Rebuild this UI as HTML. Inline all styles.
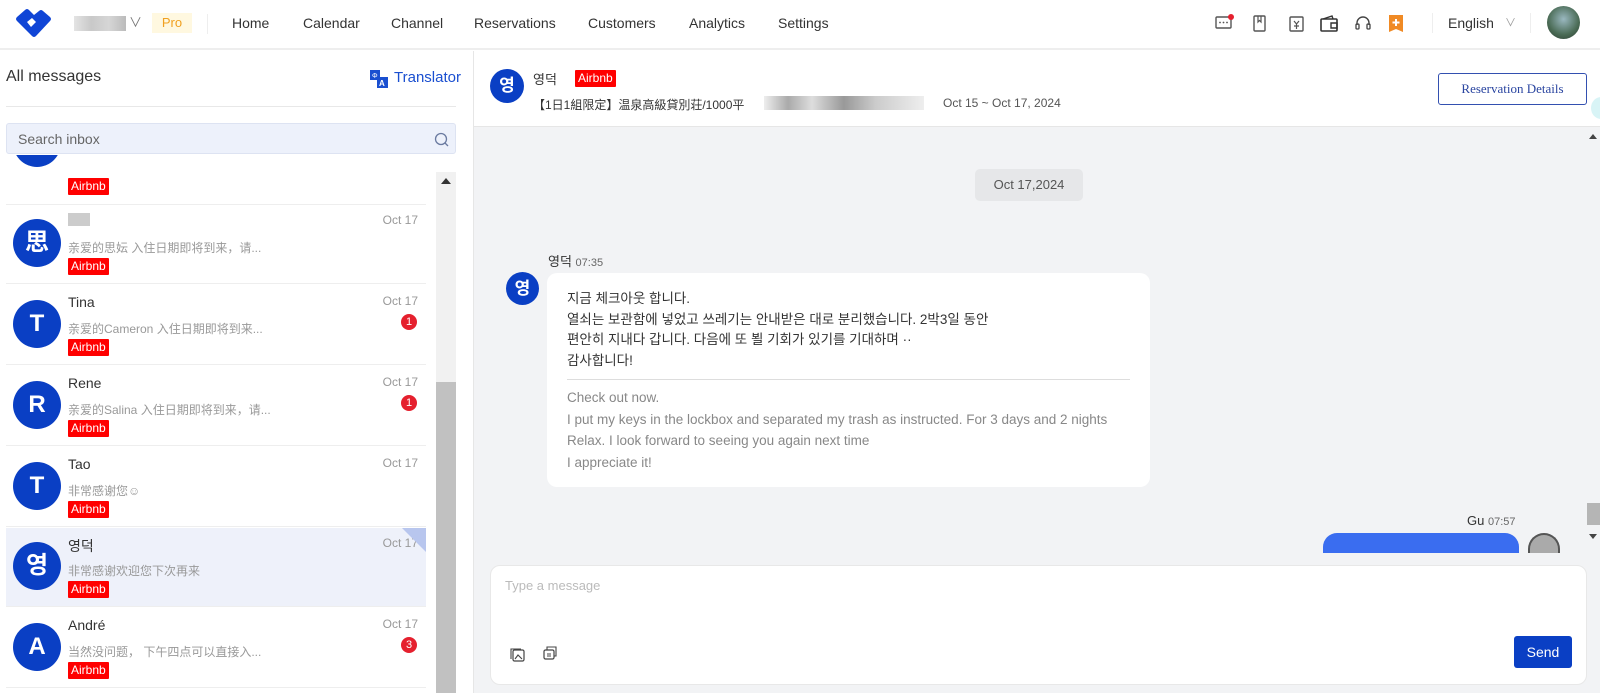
<!DOCTYPE html>
<html><head><meta charset="utf-8"><style>
*{box-sizing:border-box;margin:0;padding:0}
body{width:1600px;height:693px;overflow:hidden;background:#fff;font-family:"Liberation Sans","Noto Sans CJK SC",sans-serif;color:#333;position:relative}
.abs{position:absolute}
.nav{top:0;left:0;width:1600px;height:50px;border-bottom:2px solid #eee;background:#fff}
.nav .m{position:absolute;top:15px;font-size:14px;color:#333}
.tag{display:inline-block;background:#f00;color:#fff;font-size:12px;padding:1px 3px;line-height:15px;border-radius:1px}
.row{position:absolute;left:6px;width:420px;height:79px;border-bottom:1px solid #eee}
.av{position:absolute;left:7px;top:14px;width:48px;height:48px;border-radius:50%;background:#0a3fc4;color:#fff;font-size:24px;font-weight:bold;text-align:center;line-height:48px}
.nm{position:absolute;left:62px;top:8px;font-size:14px;color:#333}
.pv{position:absolute;left:62px;top:34px;font-size:12px;color:#999}
.rt{position:absolute;left:62px;top:52px}
.dt{position:absolute;right:8px;top:8px;font-size:12px;color:#999}
.bd{position:absolute;right:9px;top:28px;width:16px;height:16px;border-radius:50%;background:#e5202e;color:#fff;font-size:11px;text-align:center;line-height:16px}
.ic{position:absolute;top:14px}
</style></head><body>
<div class="abs nav">
<svg class="abs" style="left:14px;top:8px" width="40" height="32" viewBox="0 0 40 32"><path d="M3 13 Q1 11 3 9 L11 2 Q13 0 15 2 L20 7 L25 3 Q27 1 29 3 L36 9 Q38 11 36 13 L22 28 Q20 30 18 28 Z" fill="#1045d6"/><path d="M13 14 L18 10 L22 14 L17 19 Z" fill="#fff"/></svg>
<div class="abs" style="left:74px;top:16px;width:52px;height:15px;background:linear-gradient(90deg,#ddd,#bbb,#ccc,#aaa);opacity:.8"></div>
<div class="abs" style="left:129px;top:12px;font-size:13px;color:#777">∨</div>
<div class="abs" style="left:152px;top:13px;width:40px;height:20px;background:#fff8e0;color:#f0a020;font-size:13px;text-align:center;line-height:20px">Pro</div>
<div class="abs" style="left:207px;top:14px;width:1px;height:20px;background:#eee"></div>
<span class="m" style="left:232px">Home</span><span class="m" style="left:303px">Calendar</span><span class="m" style="left:391px">Channel</span><span class="m" style="left:474px">Reservations</span><span class="m" style="left:588px">Customers</span><span class="m" style="left:689px">Analytics</span><span class="m" style="left:778px">Settings</span>
<svg class="ic" style="left:1215px" width="20" height="18" viewBox="0 0 20 18"><rect x="1" y="3" width="15" height="11" rx="1" fill="none" stroke="#555" stroke-width="1.4"/><circle cx="5" cy="8.5" r=".9" fill="#555"/><circle cx="8.5" cy="8.5" r=".9" fill="#555"/><circle cx="12" cy="8.5" r=".9" fill="#555"/><circle cx="16" cy="3" r="3" fill="#e5202e"/></svg>
<svg class="ic" style="left:1252px" width="16" height="20" viewBox="0 0 16 20"><rect x="2" y="2" width="11" height="15" rx="1" fill="none" stroke="#555" stroke-width="1.4"/><path d="M6 2v6l1.5-1.5L9 8V2" fill="none" stroke="#555" stroke-width="1.2"/></svg>
<svg class="ic" style="left:1288px" width="18" height="20" viewBox="0 0 18 20"><rect x="2" y="3" width="13" height="14" rx="1" fill="none" stroke="#555" stroke-width="1.4"/><path d="M6 7l2.5 3 2.5-3M8.5 10v5M6 12h5" fill="none" stroke="#555" stroke-width="1.2"/></svg>
<svg class="ic" style="left:1319px" width="20" height="20" viewBox="0 0 20 20"><rect x="2" y="5" width="16" height="12" rx="1" fill="none" stroke="#333" stroke-width="1.6"/><path d="M4 5l9-3 1 3M12 9h6v5h-6z" fill="none" stroke="#333" stroke-width="1.4"/></svg>
<svg class="ic" style="left:1354px" width="18" height="20" viewBox="0 0 18 20"><path d="M3 11V9a6 6 0 0 1 12 0v2" fill="none" stroke="#444" stroke-width="1.4"/><rect x="2" y="10" width="3" height="5" rx="1" fill="none" stroke="#444" stroke-width="1.3"/><rect x="13" y="10" width="3" height="5" rx="1" fill="none" stroke="#444" stroke-width="1.3"/></svg>
<svg class="ic" style="left:1388px" width="16" height="20" viewBox="0 0 16 20"><path d="M1 1h14v17l-7-3-7 3z" fill="#f08a24"/><path d="M8 5v7M4.5 8.5h7" stroke="#fff" stroke-width="2"/></svg>
<div class="abs" style="left:1432px;top:13px;width:1px;height:20px;background:#eee"></div>
<span class="m" style="left:1448px;top:15px">English</span><span class="abs" style="left:1505px;top:14px;font-size:11px;color:#999">∨</span>
<div class="abs" style="left:1530px;top:13px;width:1px;height:20px;background:#eee"></div>
<div class="abs" style="left:1547px;top:6px;width:33px;height:33px;border-radius:50%;background:radial-gradient(circle at 50% 40%,#9ab8c0,#4a6b55 60%,#2a3a30);"></div>
</div>

<div class="abs" style="left:6px;top:68px;font-size:16px;color:#333">All messages</div>
<svg class="abs" style="left:369px;top:69px" width="20" height="20" viewBox="0 0 20 20"><rect x="1" y="1" width="10" height="10" fill="#1a4fd0"/><rect x="8" y="8" width="11" height="11" fill="#1a4fd0"/><text x="3" y="9" font-size="7" fill="#fff">Φ</text><text x="10" y="17" font-size="8" fill="#fff" font-weight="bold">A</text></svg>
<div class="abs" style="left:394px;top:69px;font-size:15px;color:#1a4fd0">Translator</div>
<div class="abs" style="left:6px;top:106px;width:450px;height:1px;background:#e8e8e8"></div>

<div class="row" style="top:155px;height:50px;overflow:hidden"><div class="av" style="top:-36px"></div><div class="rt" style="top:22px"><span class="tag">Airbnb</span></div></div>
<div class="row" style="top:205px"><div class="av">思</div><div class="nm"><span style="display:inline-block;width:22px;height:13px;background:#ccc"></span></div><div class="pv">亲爱的思妘 入住日期即将到来，请...</div><div class="rt"><span class="tag">Airbnb</span></div><div class="dt">Oct 17</div></div>
<div class="row" style="top:286px"><div class="av">T</div><div class="nm">Tina</div><div class="pv">亲爱的Cameron 入住日期即将到来...</div><div class="rt"><span class="tag">Airbnb</span></div><div class="dt">Oct 17</div><div class="bd">1</div></div>
<div class="row" style="top:367px"><div class="av">R</div><div class="nm">Rene</div><div class="pv">亲爱的Salina 入住日期即将到来，请...</div><div class="rt"><span class="tag">Airbnb</span></div><div class="dt">Oct 17</div><div class="bd">1</div></div>
<div class="row" style="top:448px"><div class="av">T</div><div class="nm">Tao</div><div class="pv">非常感谢您☺</div><div class="rt"><span class="tag">Airbnb</span></div><div class="dt">Oct 17</div></div>
<div class="row" style="top:528px;background:#eef1fa"><div class="av">영</div><div class="nm">영덕</div><div class="pv">非常感谢欢迎您下次再来</div><div class="rt"><span class="tag">Airbnb</span></div><div class="dt">Oct 17</div><div class="abs" style="right:0;top:0;width:0;height:0;border-left:24px solid transparent;border-top:24px solid #b8c6ee"></div></div>
<div class="row" style="top:609px"><div class="av">A</div><div class="nm">André</div><div class="pv">当然没问题， 下午四点可以直接入...</div><div class="rt"><span class="tag">Airbnb</span></div><div class="dt">Oct 17</div><div class="bd">3</div></div>

<div class="abs" style="left:6px;top:123px;width:450px;height:31px;background:#edf1fb;border:1px solid #dde3f2;border-radius:3px"></div>
<div class="abs" style="left:18px;top:131px;font-size:14px;color:#666">Search inbox</div>
<svg class="abs" style="left:434px;top:132px" width="15" height="15" viewBox="0 0 15 15"><circle cx="7" cy="7" r="5.5" fill="none" stroke="#6a7aa0" stroke-width="1.3"/><path d="M11 11l3 3" stroke="#6a7aa0" stroke-width="1.3"/></svg>
<div class="abs" style="left:473px;top:51px;width:1px;height:642px;background:#e6e6e6"></div>
<div class="abs" style="left:436px;top:172px;width:20px;height:521px;background:#f1f1f1"></div>
<div class="abs" style="left:436px;top:382px;width:20px;height:311px;background:#c1c1c1"></div>
<div class="abs" style="left:441px;top:178px;width:0;height:0;border-left:5px solid transparent;border-right:5px solid transparent;border-bottom:6px solid #333"></div>

<div class="abs" style="left:474px;top:51px;width:1126px;height:642px;background:#f2f3f5"></div>
<div class="abs" style="left:474px;top:51px;width:1126px;height:76px;background:#fff;border-bottom:1px solid #e6e6e6"></div>
<div class="abs" style="left:490px;top:69px;width:34px;height:34px;border-radius:50%;background:#0a3fc4;color:#fff;font-weight:bold;font-size:17px;text-align:center;line-height:34px">영</div>
<div class="abs" style="left:533px;top:69px;font-size:13px;color:#333">영덕</div>
<div class="abs" style="left:575px;top:69px"><span class="tag">Airbnb</span></div>
<div class="abs" style="left:533px;top:96px;font-size:12px;color:#333">【1日1組限定】温泉高級貸別荘/1000平</div>
<div class="abs" style="left:764px;top:96px;width:160px;height:14px;background:linear-gradient(90deg,#eee,#aaa 15%,#ddd 30%,#999 50%,#ccc 70%,#eee)"></div>
<div class="abs" style="left:943px;top:96px;font-size:12px;color:#555">Oct 15 ~ Oct 17, 2024</div>
<div class="abs" style="left:1438px;top:73px;width:149px;height:32px;border:1px solid #3350b0;border-radius:3px;font-family:'Liberation Serif',serif;font-size:13px;color:#2a45a0;text-align:center;line-height:30px">Reservation Details</div>
<div class="abs" style="left:1591px;top:97px;width:20px;height:22px;border-radius:50%;background:#d8f4f6"></div>

<div class="abs" style="left:975px;top:169px;width:108px;height:32px;background:#e6e7e9;border-radius:5px;font-size:13px;color:#555;text-align:center;line-height:32px">Oct 17,2024</div>
<div class="abs" style="left:548px;top:251px;font-size:13px;color:#333">영덕 <span style="font-size:11px;color:#666">07:35</span></div>
<div class="abs" style="left:506px;top:272px;width:33px;height:33px;border-radius:50%;background:#0a3fc4;color:#fff;font-weight:bold;font-size:17px;text-align:center;line-height:33px">영</div>
<div class="abs" style="left:547px;top:273px;width:603px;height:214px;background:#fff;border-radius:10px;padding:16px 20px 0 20px">
<div style="font-size:13.5px;line-height:20.5px;color:#333">지금 체크아웃 합니다.<br>열쇠는 보관함에 넣었고 쓰레기는 안내받은 대로 분리했습니다. 2박3일 동안<br>편안히 지내다 갑니다. 다음에 또 뵐 기회가 있기를 기대하며 ··<br>감사합니다!</div>
<div style="height:1px;background:#ddd;margin:8px 0 7px"></div>
<div style="font-size:13.5px;line-height:21.5px;color:#888">Check out now.<br>I put my keys in the lockbox and separated my trash as instructed. For 3 days and 2 nights<br>Relax. I look forward to seeing you again next time<br>I appreciate it!</div>
</div>
<div class="abs" style="left:1467px;top:513px;font-size:13px;color:#333">Gu <span style="font-size:11px;color:#666">07:57</span></div>
<div class="abs" style="left:1323px;top:533px;width:196px;height:20px;background:#3a6df0;border-radius:14px 14px 0 0"></div>
<div class="abs" style="left:1528px;top:533px;width:32px;height:20px;border-radius:16px 16px 0 0;background:#aaa;border:2px solid #555;border-bottom:none"></div>
<div class="abs" style="left:1587px;top:503px;width:13px;height:22px;background:#b5b5b5"></div>
<div class="abs" style="left:1589px;top:534px;width:0;height:0;border-left:4px solid transparent;border-right:4px solid transparent;border-top:5px solid #444"></div>
<div class="abs" style="left:1589px;top:134px;width:0;height:0;border-left:4px solid transparent;border-right:4px solid transparent;border-bottom:5px solid #444"></div>

<div class="abs" style="left:490px;top:565px;width:1097px;height:120px;background:#fff;border:1px solid #e8e8e8;border-radius:10px"></div>
<div class="abs" style="left:505px;top:578px;font-size:13px;color:#bbb">Type a message</div>
<svg class="abs" style="left:510px;top:647px" width="16" height="16" viewBox="0 0 16 16"><rect x="3" y="3" width="11" height="11" rx="1.5" fill="none" stroke="#444" stroke-width="1.2"/><path d="M1 12V2h10" fill="none" stroke="#444" stroke-width="1.1"/><path d="M5 12l3-4 4 4" fill="none" stroke="#444" stroke-width="1.1"/></svg>
<svg class="abs" style="left:542px;top:645px" width="16" height="16" viewBox="0 0 16 16"><rect x="2" y="5" width="10" height="9" rx="1.5" fill="none" stroke="#444" stroke-width="1.2"/><path d="M5 5V2h9v9h-2M5 9h4M5 11h4" fill="none" stroke="#444" stroke-width="1.1"/></svg>
<div class="abs" style="left:1514px;top:636px;width:58px;height:32px;background:#0a3fc4;border-radius:3px;color:#fff;font-size:14px;text-align:center;line-height:32px">Send</div>
</body></html>
